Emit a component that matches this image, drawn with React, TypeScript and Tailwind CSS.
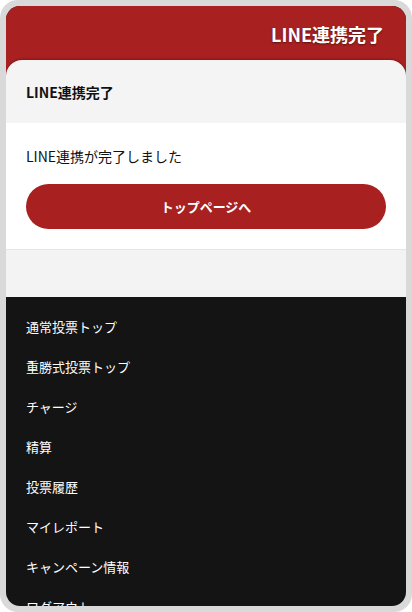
const menu = [
  "通常投票トップ",
  "重勝式投票トップ",
  "チャージ",
  "精算",
  "投票履歴",
  "マイレポート",
  "キャンペーン情報",
  "ログアウト",
];

export default function App() {
  return (
    <div className="h-[612px] w-[412px] bg-white font-['Noto_Sans_CJK_JP','Noto_Sans',sans-serif]">
      <div className="h-full rounded-[18px] bg-[#d9d9d9] p-[6px]">
        <div className="flex h-full flex-col overflow-hidden rounded-[14px] bg-[#141414]">

          <div className="shrink-0 bg-[#a82020]">
            <div className="flex h-[54px] items-center justify-end pr-[22px] pt-[3px]">
              <h1 className="text-[18px] font-bold text-white [text-shadow:0_1px_2px_rgba(0,0,0,0.45)]">
                LINE連携完了
              </h1>
            </div>

            <div className="rounded-t-[16px] bg-[#f4f4f4] shadow-[0_-1px_2px_rgba(0,0,0,0.25)]">
              <div className="flex h-[63px] items-center px-[20px] pt-[2px]">
                <h2 className="text-[14px] font-bold text-[#111]">LINE連携完了</h2>
              </div>
            </div>
          </div>

          <section className="shrink-0 border-b border-[#e6e6e6] bg-white px-[20px] pb-[20px] pt-[23px]">
            <p className="text-[14px] leading-[20px] text-[#111]">LINE連携が完了しました</p>
            <button className="mt-[18px] flex h-[45px] w-full items-center justify-center rounded-full bg-[#a82020] text-[13px] font-bold text-white">
              トップページへ
            </button>
          </section>

          <div className="h-[47px] shrink-0 bg-[#f3f3f3]" />

          <nav className="flex shrink-0 flex-col pt-[10px]">
            {menu.map((m) => (
              <a key={m} className="px-[20px] py-[10px] text-[13px] leading-[20px] text-white">
                {m}
              </a>
            ))}
          </nav>

        </div>
      </div>
    </div>
  );
}
